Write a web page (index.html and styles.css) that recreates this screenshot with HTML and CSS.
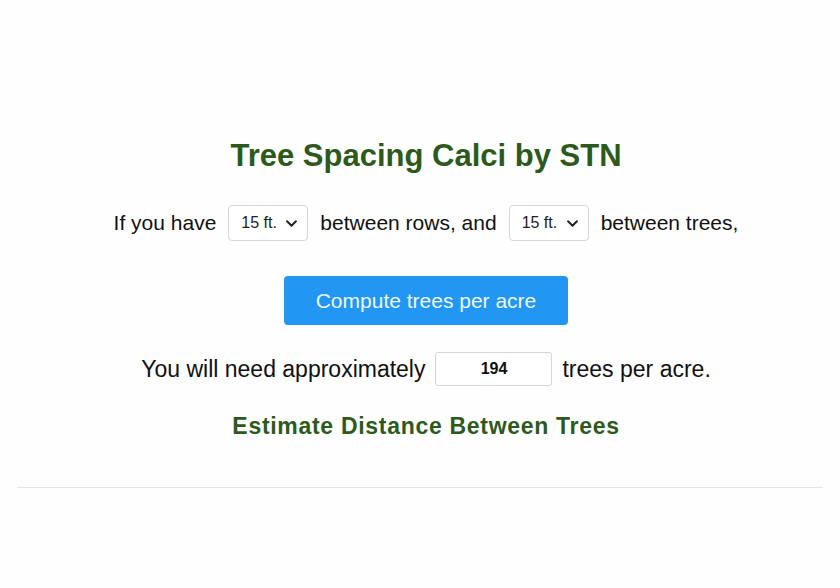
FILE: index.html
```html
<!DOCTYPE html>
<html lang="en">
<head>
<meta charset="utf-8">
<title>Tree Spacing Calci by STN</title>
<link rel="stylesheet" href="styles.css">
</head>
<body>
<main class="calc">
  <h1 class="calc-title">Tree Spacing Calci by STN</h1>
  <div class="calc-row">
    <span>If you have</span>
    <div class="select-box"><span>15 ft.</span><svg class="chev" viewBox="0 0 10 6" width="11" height="7"><path d="M1 1l4 4 4-4" fill="none" stroke="#222" stroke-width="1.8" stroke-linecap="round" stroke-linejoin="round"/></svg></div>
    <span>between rows, and</span>
    <div class="select-box"><span>15 ft.</span><svg class="chev" viewBox="0 0 10 6" width="11" height="7"><path d="M1 1l4 4 4-4" fill="none" stroke="#222" stroke-width="1.8" stroke-linecap="round" stroke-linejoin="round"/></svg></div>
    <span>between trees,</span>
  </div>
  <button class="calc-btn" type="button">Compute trees per acre</button>
  <div class="calc-result">
    <span>You will need approximately</span>
    <div class="result-box">194</div>
    <span>trees per acre.</span>
  </div>
  <h2 class="calc-sub">Estimate Distance Between Trees</h2>
</main>
<hr class="divider">
</body>
</html>
```
FILE: styles.css
```css
html, body {
  margin: 0;
  padding: 0;
  background: #fefefe;
}

body {
  font-family: "Liberation Sans", Arial, sans-serif;
  color: #111;
}

.calc {
  display: flex;
  flex-direction: column;
  align-items: center;
  padding: 138px 0 0 12px;
}

.calc-title {
  margin: 0;
  font-size: 31px;
  font-weight: bold;
  color: #2d5a1c;
  line-height: 36px;
}

.calc-row {
  display: flex;
  align-items: center;
  gap: 12px;
  margin-top: 31px;
  font-size: 21px;
}

.select-box {
  display: flex;
  align-items: center;
  justify-content: space-between;
  box-sizing: border-box;
  width: 80px;
  height: 36px;
  padding: 0 10px 0 12px;
  border: 1px solid #d6d6d6;
  border-radius: 4px;
  background: #fff;
  font-size: 16px;
  color: #222;
}

.calc-btn {
  margin-top: 35px;
  width: 284px;
  height: 49px;
  border: none;
  border-radius: 4px;
  background: #2196f3;
  color: #eef7ff;
  font-family: inherit;
  font-size: 21px;
}

.calc-result {
  display: flex;
  align-items: center;
  gap: 10px;
  margin-top: 27px;
  font-size: 23px;
}

.result-box {
  box-sizing: border-box;
  width: 117px;
  height: 34px;
  border: 1px solid #d6d6d6;
  border-radius: 3px;
  background: #fff;
  display: flex;
  align-items: center;
  justify-content: center;
  font-size: 16px;
  font-weight: bold;
  color: #111;
}

.calc-sub {
  margin: 27px 0 0;
  font-size: 23px;
  font-weight: bold;
  color: #2d5a1c;
  letter-spacing: 0.7px;
}

.divider {
  margin: 47px 17px 0 17px;
  border: none;
  border-top: 1px solid #e4e4e4;
}
```
